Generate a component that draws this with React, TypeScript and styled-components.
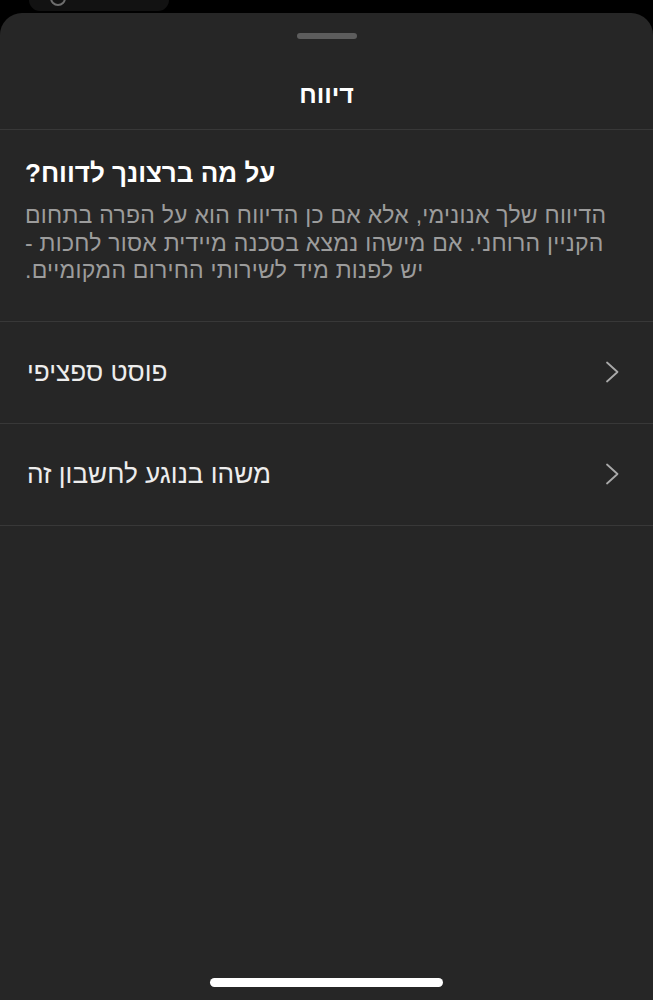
import React from "react";
import styled, { createGlobalStyle } from "styled-components";

const GlobalStyle = createGlobalStyle`
  html, body {
    margin: 0;
    padding: 0;
    background: #000;
    font-family: "Liberation Sans", "DejaVu Sans", sans-serif;
  }
  * { box-sizing: border-box; }
`;

const options = ["פוסט ספציפי", "משהו בנוגע לחשבון זה"];

export default function App() {
  return (
    <>
      <GlobalStyle />
      <Screen>
        <TopStrip>
          <Chip>
            <Ring />
          </Chip>
        </TopStrip>
        <Sheet>
          <Handle />
          <Header>
            <Title dir="rtl">דיווח</Title>
          </Header>
          <Intro>
            <Question dir="rtl">על מה ברצונך לדווח?</Question>
            <Explain dir="rtl">
              הדיווח שלך אנונימי, אלא אם כן הדיווח הוא על הפרה בתחום
              <br />
              הקניין הרוחני. אם מישהו נמצא בסכנה מיידית אסור לחכות -
              <br />
              יש לפנות מיד לשירותי החירום המקומיים.
            </Explain>
          </Intro>
          {options.map((o) => (
            <Row key={o}>
              <RowLabel dir="rtl">{o}</RowLabel>
              <Chevron width="15" height="22" viewBox="0 0 15 22">
                <polyline points="2,1.5 12.5,11 2,20.5" />
              </Chevron>
            </Row>
          ))}
          <HomeBar />
        </Sheet>
      </Screen>
    </>
  );
}

const Screen = styled.div`
  width: 653px;
  height: 1000px;
  display: flex;
  flex-direction: column;
  background: #000;
  overflow: hidden;
`;

const TopStrip = styled.div`
  height: 13px;
  flex-shrink: 0;
  padding-left: 29px;
`;

const Chip = styled.div`
  width: 140px;
  height: 11px;
  background: #121212;
  border-radius: 0 0 14px 14px;
  padding-left: 21px;
  overflow: hidden;
`;

const Ring = styled.div`
  width: 16px;
  height: 16px;
  margin-top: -10px;
  border-radius: 50%;
  border: 2px solid #6e6e6e;
`;

const Sheet = styled.div`
  flex: 1;
  display: flex;
  flex-direction: column;
  background: #262626;
  border-radius: 22px 22px 0 0;
`;

const Handle = styled.div`
  align-self: center;
  width: 60px;
  height: 6px;
  margin-top: 20px;
  border-radius: 3px;
  background: #5d5d5d;
`;

const Header = styled.div`
  height: 91px;
  padding-top: 40px;
  border-bottom: 1px solid #383838;
  text-align: center;
`;

const Title = styled.div`
  color: #fff;
  font-size: 25px;
  font-weight: 700;
  line-height: 30px;
`;

const Intro = styled.div`
  padding: 28px 26px 36px 25px;
  border-bottom: 1px solid #383838;
`;

const Question = styled.div`
  color: #fff;
  font-size: 26px;
  font-weight: 700;
  line-height: 30px;
  text-align: left;
`;

const Explain = styled.div`
  margin-top: 14px;
  color: #9c9c9c;
  font-size: 23px;
  letter-spacing: 0.25px;
  line-height: 27.5px;
  text-align: left;
  white-space: nowrap;
`;

const Row = styled.div`
  height: 102px;
  display: flex;
  align-items: center;
  justify-content: space-between;
  padding: 0 33px 0 27px;
  border-bottom: 1px solid #383838;
`;

const RowLabel = styled.div`
  color: #ededed;
  font-size: 26.2px;
  line-height: 30px;
`;

const Chevron = styled.svg`
  fill: none;
  stroke: #a9a9a9;
  stroke-width: 1.8;
  stroke-linecap: round;
  stroke-linejoin: round;
`;

const HomeBar = styled.div`
  align-self: center;
  margin-top: auto;
  margin-bottom: 13px;
  width: 233px;
  height: 9px;
  border-radius: 5px;
  background: #fff;
`;
